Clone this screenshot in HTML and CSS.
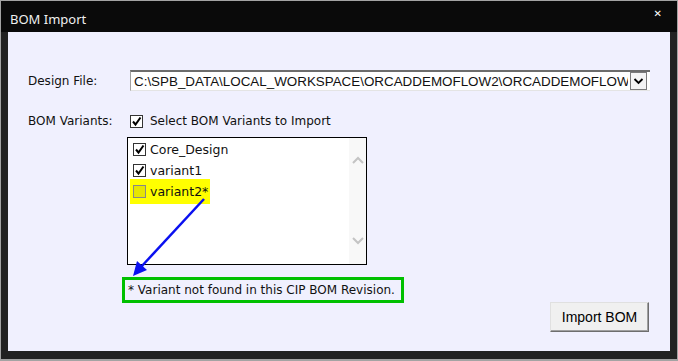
FILE: index.html
```html
<!DOCTYPE html>
<html lang="en">
<head>
    <meta charset="UTF-8">
    <meta name="viewport" content="width=device-width, initial-scale=1.0">
    <title>BOM Import</title>
    <link rel="stylesheet" href="styles.css">
</head>
<body>
    <div class="window">
        <div class="titlebar">
            <span class="title">BOM Import</span>
            <span class="close">&#x2715;</span>
        </div>
        <div class="frame">
            <div class="content">
                <div class="row design-row">
                    <label class="field-label">Design File:</label>
                    <div class="combo">
                        <span class="combo-text">C:\SPB_DATA\LOCAL_WORKSPACE\ORCADDEMOFLOW2\ORCADDEMOFLOW</span>
                        <span class="combo-btn">
                            <svg width="11" height="8" viewBox="0 0 11 8"><path d="M1.5 2 L5.5 6 L9.5 2" fill="none" stroke="#000" stroke-width="1.8"/></svg>
                        </span>
                    </div>
                </div>

                <div class="row variants-row">
                    <label class="field-label">BOM Variants:</label>
                    <span class="check checked"><svg width="11" height="11" viewBox="0 0 11 11"><path d="M2 5.5 L4.5 8.5 L9.5 1.5" fill="none" stroke="#000" stroke-width="2"/></svg></span>
                    <span class="check-text">Select BOM Variants to Import</span>
                </div>

                <div class="listbox">
                    <div class="items">
                        <div class="item">
                            <span class="check checked"><svg width="11" height="11" viewBox="0 0 11 11"><path d="M2 5.5 L4.5 8.5 L9.5 1.5" fill="none" stroke="#000" stroke-width="2"/></svg></span>
                            <span>Core_Design</span>
                        </div>
                        <div class="item">
                            <span class="check checked"><svg width="11" height="11" viewBox="0 0 11 11"><path d="M2 5.5 L4.5 8.5 L9.5 1.5" fill="none" stroke="#000" stroke-width="2"/></svg></span>
                            <span>variant1</span>
                        </div>
                        <div class="item missing">
                            <span class="check"></span>
                            <span>variant2*</span>
                        </div>
                    </div>
                    <div class="scrollbar">
                        <svg width="12" height="8" viewBox="0 0 12 8"><path d="M1 7 L6 2 L11 7" fill="none" stroke="#c4c4c4" stroke-width="2"/></svg>
                        <svg width="12" height="8" viewBox="0 0 12 8"><path d="M1 1 L6 6 L11 1" fill="none" stroke="#c4c4c4" stroke-width="2"/></svg>
                    </div>
                </div>

                <div class="bottom-row">
                    <div class="note">* Variant not found in this CIP BOM Revision.</div>
                    <button class="import-btn">Import BOM</button>
                </div>
            </div>
        </div>

        <svg class="pointer" width="678" height="361" viewBox="0 0 678 361">
            <line x1="204" y1="199" x2="141" y2="267" stroke="#0a10f0" stroke-width="2.5"/>
            <path d="M133 276 L137 261 L147 270 Z" fill="#0a10f0"/>
        </svg>
    </div>
</body>
</html>
```

FILE: styles.css
```css
body {
    margin: 0;
    background-color: #a0a0a0;
}

.window {
    position: relative;
    width: 678px;
    height: 361px;
    box-sizing: border-box;
    border: 1px solid #a3a3a3;
    border-bottom-width: 2px;
    background-color: #222222;
    display: flex;
    flex-direction: column;
}

.titlebar {
    height: 31px;
    background-color: #0a0a0a;
    display: flex;
    align-items: flex-start;
    justify-content: space-between;
}

.title {
    font-family: "Noto Sans", sans-serif;
    font-size: 13px;
    color: #f0f0f0;
    margin: 10px 0 0 9px;
    line-height: 17px;
}

.close {
    font-family: "DejaVu Sans", sans-serif;
    font-size: 10px;
    font-weight: bold;
    color: #ffffff;
    margin: 7px 15px 0 0;
    line-height: 12px;
}

.frame {
    flex: 1;
    padding: 0 7px 8px 7px;
    display: flex;
}

.content {
    flex: 1;
    background-color: #f0f0fe;
    padding-left: 20px;
    font-family: "DejaVu Sans", sans-serif;
    font-size: 12px;
    color: #111;
}

.row {
    display: flex;
    align-items: center;
}

.design-row {
    margin-top: 38px;
    height: 21px;
}

.field-label {
    width: 102px;
    flex-shrink: 0;
}

.combo {
    width: 520px;
    height: 21px;
    box-sizing: border-box;
    background-color: #fff;
    border-top: 2px solid #6c6c6c;
    border-left: 1px solid #a0a0a0;
    border-bottom: 1px solid #e4e4e4;
    display: flex;
    align-items: center;
    padding-left: 3px;
    overflow: hidden;
}

.combo-text {
    font-family: "Liberation Sans", sans-serif;
    font-size: 13.4px;
    white-space: nowrap;
    overflow: hidden;
    width: 494px;
    flex-shrink: 0;
}

.combo-btn {
    width: 17px;
    height: 18px;
    box-sizing: border-box;
    border: 1px solid #7a7a7a;
    background-color: #f4f4f4;
    display: flex;
    align-items: center;
    justify-content: center;
    margin-left: 2px;
    margin-top: -1px;
}

.variants-row {
    margin-top: 22px;
    height: 16px;
}

.check {
    width: 13px;
    height: 13px;
    box-sizing: border-box;
    border: 1px solid #333;
    background-color: #fff;
    display: inline-flex;
    align-items: center;
    justify-content: center;
    flex-shrink: 0;
}

.check-text {
    margin-left: 7px;
}

.listbox {
    margin: 8px 0 0 99px;
    width: 240px;
    height: 128px;
    box-sizing: border-box;
    border: 1px solid #000;
    background-color: #fff;
    display: flex;
}

.items {
    flex: 1;
    padding: 1px 0 0 2px;
}

.item {
    display: flex;
    align-items: center;
    gap: 4px;
    height: 21px;
    font-size: 12.5px;
    padding-left: 3px;
    width: 76px;
}

.item.missing {
    background-color: #ffff00;
    height: 25px;
    margin-top: -2px;
    width: 77px;
}

.item.missing .check {
    background-color: #e6e600;
    border-color: #888;
}

.scrollbar {
    width: 17px;
    background-color: #f8f8f8;
    display: flex;
    flex-direction: column;
    align-items: center;
    justify-content: space-between;
    padding: 18px 0 19px 0;
}

.bottom-row {
    display: flex;
    justify-content: space-between;
    align-items: flex-start;
    margin-top: 12px;
    padding-right: 21px;
}

.note {
    margin-left: 94px;
    width: 282px;
    height: 26px;
    box-sizing: border-box;
    border: 3px solid #00c000;
    display: flex;
    align-items: center;
    padding-left: 3px;
    font-size: 12px;
    white-space: nowrap;
}

.import-btn {
    margin-top: 25px;
    width: 99px;
    height: 30px;
    background-color: #f0f0f0;
    border: 1px solid;
    border-color: #e0e0e0 #6e6e6e #6e6e6e #e0e0e0;
    box-shadow: inset -1px -1px 0 #a0a0a0;
    font-family: "Liberation Sans", sans-serif;
    font-size: 14px;
    color: #000;
}

.pointer {
    position: absolute;
    left: -1px;
    top: -1px;
    pointer-events: none;
}
```
